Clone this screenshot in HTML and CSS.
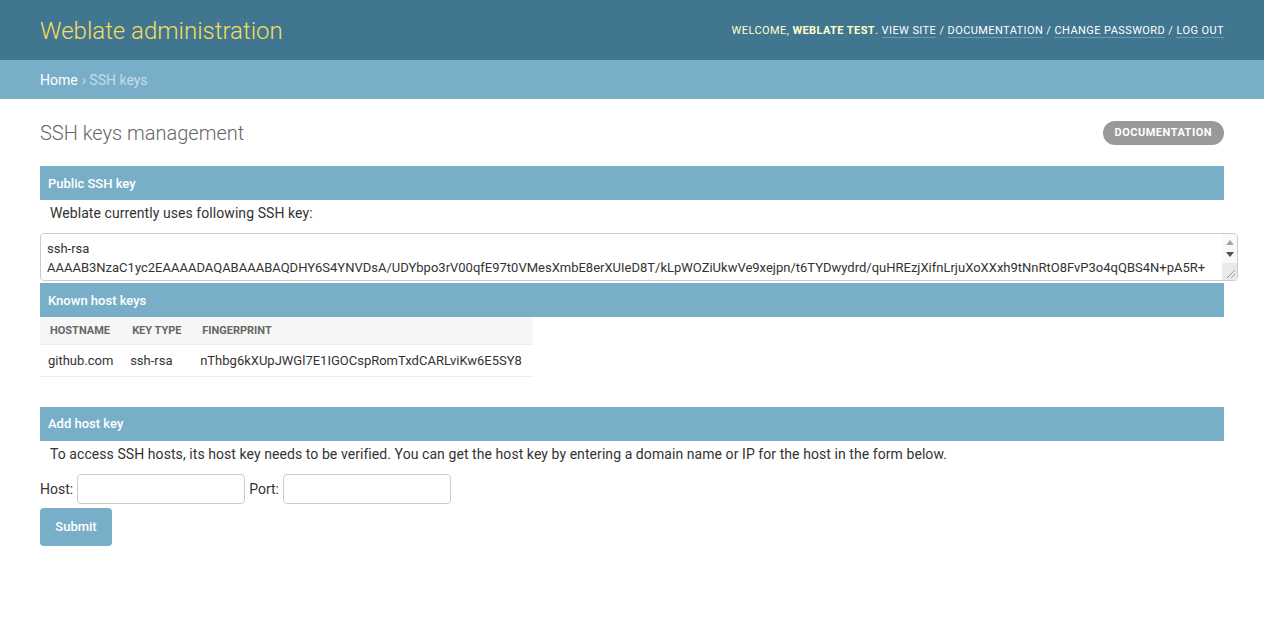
FILE: index.html
```html
<!DOCTYPE html>
<html>
<head>
<meta charset="utf-8">
<title>SSH keys | Weblate administration</title>
<link rel="stylesheet" href="styles.css">
</head>
<body>
<header class="header">
  <div class="branding">Weblate administration</div>
  <div class="user-tools">
    Welcome, <strong>Weblate Test</strong>.
    <a href="#">View site</a> /
    <a href="#">Documentation</a> /
    <a href="#">Change password</a> /
    <a href="#">Log out</a>
  </div>
</header>
<div class="breadcrumbs"><a href="#">Home</a> › SSH keys</div>
<main class="content">
  <div class="title-row">
    <h1 class="page-title">SSH keys management</h1>
    <a class="doc-button" href="#">Documentation</a>
  </div>

  <section class="module">
    <h2 class="module-title">Public SSH key</h2>
    <p class="module-text">Weblate currently uses following SSH key:</p>
    <div class="key-wrap">
      <textarea class="key-area" readonly>ssh-rsa
AAAAB3NzaC1yc2EAAAADAQABAAABAQDHY6S4YNVDsA/UDYbpo3rV00qfE97t0VMesXmbE8erXUIeD8T/kLpWOZiUkwVe9xejpn/t6TYDwydrd/quHREzjXifnLrjuXoXXxh9tNnRtO8FvP3o4qQBS4N+pA5R+ j5kQm0tyJ2Ch/Zq3c1lyVt7AJnhkFxqvFkw/9QXBlz1sZYuhSaAmhQ2rkeXDoD1a4R8vfwEMK3bGnpwQB6kCs1qoKhLvRYjcLgwTtGWxuEnhvFT3NZrdCqOkhjYVKHbnF25v9pj8gqa4tyPZscD86sRuNAUNeLTl7Wz+sxEJpNV2d2LvUyRUyx2Yy5iEOI9EZ3WnlI weblate@example.com</textarea>
      <div class="fake-scrollbar" aria-hidden="true">
        <span class="arrow-up"></span>
        <span class="arrow-down"></span>
        <span class="sb-corner">
          <svg width="15" height="17" viewBox="0 0 15 17"><path d="M13 7 L5 15 M13 11 L9 15" stroke="#9a9a9a" stroke-width="1" fill="none"/></svg>
        </span>
      </div>
    </div>
  </section>

  <section class="module module-spaced">
    <h2 class="module-title">Known host keys</h2>
    <table class="hosts">
      <thead>
        <tr><th>Hostname</th><th>Key type</th><th>Fingerprint</th></tr>
      </thead>
      <tbody>
        <tr><td>github.com</td><td>ssh-rsa</td><td>nThbg6kXUpJWGl7E1IGOCspRomTxdCARLviKw6E5SY8</td></tr>
      </tbody>
    </table>
  </section>

  <section class="module">
    <h2 class="module-title">Add host key</h2>
    <p class="module-text">To access SSH hosts, its host key needs to be verified. You can get the host key by entering a domain name or IP for the host in the form below.</p>
    <form class="host-form">
      <div class="form-row">
        <label class="field-label" for="host">Host:</label>
        <input class="field-input" id="host" type="text">
        <label class="field-label" for="port">Port:</label>
        <input class="field-input" id="port" type="text">
      </div>
      <button class="submit-btn" type="button">Submit</button>
    </form>
  </section>
</main>
</body>
</html>
```

FILE: styles.css
```css
* { box-sizing: border-box; }

html, body {
  margin: 0;
  padding: 0;
}

body {
  font-family: Roboto, "Liberation Sans", sans-serif;
  font-size: 14px;
  color: #333;
  background: #fff;
}

a { text-decoration: none; }

.header {
  height: 60px;
  background: #417690;
  padding: 0 40px;
  display: flex;
  align-items: center;
  justify-content: space-between;
}

.branding {
  font-size: 24px;
  font-weight: 300;
  color: #f5dd5d;
  margin-top: 1px;
}

.user-tools {
  font-size: 11px;
  letter-spacing: 0.42px;
  text-transform: uppercase;
  color: #ffc;
  margin-top: 1px;
}

.user-tools strong {
  font-weight: 700;
  color: #ffc;
}

.user-tools a {
  color: #fff;
  border-bottom: 1px solid rgba(255, 255, 255, 0.25);
}

.breadcrumbs {
  height: 39px;
  background: #79aec8;
  padding: 0 40px;
  display: flex;
  align-items: center;
  color: #c4dce8;
  font-size: 14px;
}

.breadcrumbs a {
  color: #fff;
  margin-right: 4px;
}

.content {
  padding: 20px 40px;
}

.title-row {
  height: 27px;
  display: flex;
  align-items: center;
  justify-content: space-between;
  margin-bottom: 20px;
}

.page-title {
  margin: 0;
  font-size: 20px;
  font-weight: 300;
  color: #666;
}

.doc-button {
  height: 24px;
  padding: 0 12px;
  border-radius: 15px;
  background: #999;
  color: #fff;
  font-size: 11px;
  font-weight: 700;
  letter-spacing: 0.5px;
  text-transform: uppercase;
  display: flex;
  align-items: center;
}

.module {
  margin: 0;
}

.module-spaced {
  margin-bottom: 30px;
}

.module-title {
  margin: 0;
  height: 34px;
  padding: 0 8px;
  display: flex;
  align-items: center;
  background: #79aec8;
  color: #fff;
  font-size: 13px;
  font-weight: 500;
}

.module-text {
  margin: 3px 0 10px;
  padding: 0 10px;
  line-height: 20px;
  font-size: 14px;
  letter-spacing: 0.07px;
}

.key-wrap {
  position: relative;
  width: 1198px;
  height: 48px;
  margin: 0 0 2px;
}

.key-area {
  display: block;
  width: 100%;
  height: 100%;
  margin: 0;
  padding: 5px 22px 0 6px;
  border: 1px solid #ccc;
  border-radius: 4px;
  font-family: Roboto, "Liberation Sans", sans-serif;
  font-size: 13px;
  line-height: 19px;
  color: #333;
  resize: none;
  overflow: hidden;
}

.fake-scrollbar {
  position: absolute;
  top: 1px;
  right: 1px;
  bottom: 1px;
  width: 15px;
  background: #f9f9f9;
  border-radius: 0 3px 3px 0;
  overflow: hidden;
}

.arrow-up,
.arrow-down {
  position: absolute;
  left: 4px;
  width: 0;
  height: 0;
  border-left: 4px solid transparent;
  border-right: 4px solid transparent;
}

.arrow-up {
  top: 6px;
  border-bottom: 5px solid #a3a3a3;
}

.arrow-down {
  top: 18px;
  border-top: 5px solid #505050;
}

.sb-corner {
  position: absolute;
  left: 0;
  right: 0;
  bottom: 0;
  height: 17px;
  background: #e9e9e9;
  display: block;
}

.sb-corner svg { display: block; }

.hosts {
  border-collapse: collapse;
  width: 493px;
}

.hosts th {
  background: #f6f6f6;
  color: #666;
  font-size: 11px;
  font-weight: 700;
  text-transform: uppercase;
  text-align: left;
  height: 27px;
  padding: 0 10px;
  border-bottom: 1px solid #eee;
  white-space: nowrap;
}

.hosts td {
  font-size: 13px;
  height: 32px;
  padding: 0 8px;
  border-bottom: 1px solid #eee;
  white-space: nowrap;
}

.host-form {
  margin: 0;
}

.form-row {
  display: flex;
  align-items: center;
  gap: 4px;
  margin-bottom: 4px;
}

.field-label {
  font-size: 14px;
  color: #333;
}

.field-input {
  width: 168px;
  height: 30px;
  padding: 5px 6px;
  border: 1px solid #ccc;
  border-radius: 4px;
  font-family: inherit;
  font-size: 13px;
}

.submit-btn {
  width: 72px;
  height: 38px;
  padding: 0;
  border: none;
  border-radius: 4px;
  background: #79aec8;
  color: #fff;
  font-family: inherit;
  font-size: 13px;
  font-weight: 500;
}
```
